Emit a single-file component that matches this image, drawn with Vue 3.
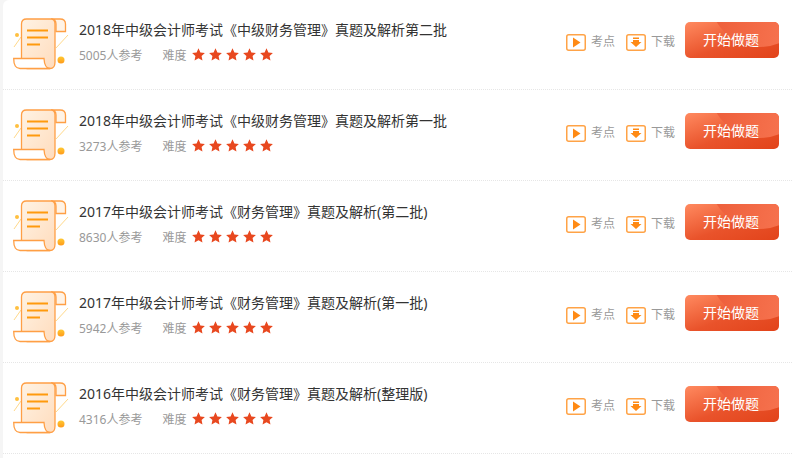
<script setup>
const items = [
  { title: '2018年中级会计师考试《中级财务管理》真题及解析第二批', count: 5005 },
  { title: '2018年中级会计师考试《中级财务管理》真题及解析第一批', count: 3273 },
  { title: '2017年中级会计师考试《财务管理》真题及解析(第二批)', count: 8630 },
  { title: '2017年中级会计师考试《财务管理》真题及解析(第一批)', count: 5942 },
  { title: '2016年中级会计师考试《财务管理》真题及解析(整理版)', count: 4316 }
]
const stars = [1, 2, 3, 4, 5]
</script>

<template>
  <div class="page">
    <ul class="list">
      <li v-for="(item, i) in items" :key="i" class="row">
        <svg class="scroll" width="58" height="52" viewBox="0 0 58 52">
          <defs>
            <linearGradient :id="'paper' + i" x1="0" y1="0" x2="1" y2="1">
              <stop offset="0" stop-color="#fff3e4" />
              <stop offset="1" stop-color="#ffdcbd" />
            </linearGradient>
            <linearGradient :id="'ball' + i" x1="0" y1="0" x2="0" y2="1">
              <stop offset="0" stop-color="#ffc933" />
              <stop offset="1" stop-color="#ff9a1a" />
            </linearGradient>
          </defs>
          <path d="M1 29 L8 19" stroke="#ffd98a" stroke-width="1" fill="none" />
          <path d="M43 30 L55 17" stroke="#ffd98a" stroke-width="1" fill="none" />
          <circle cx="4" cy="17" r="2" fill="#ffc040" />
          <path d="M40 1 H47 Q52.500 1 52.500 6 V13.500 H43 V6 Q43 1 38 1 Z" fill="#fff3e6" stroke="#ff9f45" stroke-width="1.300" />
          <path d="M8.500 40 V6 Q8.500 1 13.500 1 H38 Q42 1 42 6 V44 Q42 50.500 37 50.500 H14 Z" :fill="'url(#paper' + i + ')'" stroke="#ff9f45" stroke-width="1.300" />
          <path d="M0.700 40.500 H31 Q31.500 50.500 37 50.500 H7 Q0.700 50.500 0.700 40.500 Z" fill="#fff" stroke="#ff9f45" stroke-width="1.300" />
          <path d="M14 12.500 H35 M14 19.500 H35 M14 26.500 H27" stroke="#ff9a0d" stroke-width="2" fill="none" />
          <circle cx="48" cy="42" r="3.500" :fill="'url(#ball' + i + ')'" />
        </svg>
        <div class="info">
          <div class="title">{{ item.title }}</div>
          <div class="meta">
            <span class="count">{{ item.count }}人参考</span>
            <span class="level">难度</span>
            <span class="stars">
              <svg v-for="s in stars" :key="s" width="13" height="13" viewBox="0 0 24 24">
                <path d="M12 0.500 L15.500 8.200 L23.800 9.200 L17.700 14.900 L19.300 23.200 L12 19 L4.700 23.200 L6.300 14.900 L0.200 9.200 L8.500 8.200 Z" fill="#e8481f" />
              </svg>
            </span>
          </div>
        </div>
        <a class="action action-first">
          <svg width="20" height="17" viewBox="0 0 20 17">
            <rect x="0.750" y="0.750" width="18.500" height="15.500" rx="2" fill="#fff" stroke="#ffa347" stroke-width="1.500" />
            <path d="M7 3.500 L14.500 8.500 L7 13.500 Z" fill="#ff8a14" />
          </svg>
          <span class="action-text">考点</span>
        </a>
        <a class="action">
          <svg width="20" height="17" viewBox="0 0 20 17">
            <rect x="0.750" y="0.750" width="18.500" height="15.500" rx="2" fill="#fff" stroke="#ffa347" stroke-width="1.500" />
            <path d="M7 3.500 H13 V5 H7 Z M7 6 H13 V8 H15.500 L10 13 L4.500 8 H7 Z" fill="#ff8a14" />
          </svg>
          <span class="action-text">下载</span>
        </a>
        <button class="start">
          <span class="shine"></span>
          <span class="label">开始做题</span>
        </button>
      </li>
    </ul>
  </div>
</template>

<style scoped>
.page {
  width: 792px;
  height: 458px;
  overflow: hidden;
  background: #f5f5f5;
  padding-left: 3px;
  box-sizing: border-box;
  font-family: "Noto Sans", "Noto Sans CJK SC", sans-serif;
}
.list {
  height: 100%;
  margin: 0;
  padding: 0;
  list-style: none;
  background: #fff;
  border-top-left-radius: 6px;
}
.row {
  box-sizing: border-box;
  height: 91px;
  border-bottom: 1px dotted #e6e6e6;
  display: flex;
  align-items: center;
  padding: 1px 13px 9px 10px;
}
.row:first-child {
  height: 90px;
  padding-top: 0;
}
.scroll {
  flex: none;
  margin-top: 8px;
}
.info {
  flex: 1;
  margin: 6px 0 0 8px;
  min-width: 0;
}
.title {
  font-size: 14px;
  line-height: 20px;
  color: #333;
}
.meta {
  display: flex;
  align-items: center;
  margin-top: 6px;
  font-size: 12px;
  line-height: 20px;
  color: #999;
}
.level {
  margin-left: 20px;
}
.stars {
  display: flex;
  gap: 4px;
  margin: -4px 0 0 6px;
}
.action {
  display: flex;
  align-items: center;
  gap: 5px;
  font-size: 12px;
  color: #999;
  margin: 5px 10px 0 0;
}
.action-first {
  margin-right: 11px;
}
.action-text {
  margin-top: -3px;
}
.start {
  position: relative;
  overflow: hidden;
  flex: none;
  width: 94px;
  height: 36px;
  margin: 0;
  padding: 0 2px 2px 0;
  border: 0;
  border-radius: 5px;
  background: linear-gradient(160deg, #ff8a60 0%, #e9532b 55%, #e2431a 100%);
  color: #fff;
  font: inherit;
  font-size: 14px;
}
.shine {
  position: absolute;
  left: 25px;
  top: -75px;
  width: 100px;
  height: 100px;
  border-radius: 50%;
  background: linear-gradient(100deg, #eb5a36, #fa7a56);
}
.label {
  position: relative;
}
</style>
